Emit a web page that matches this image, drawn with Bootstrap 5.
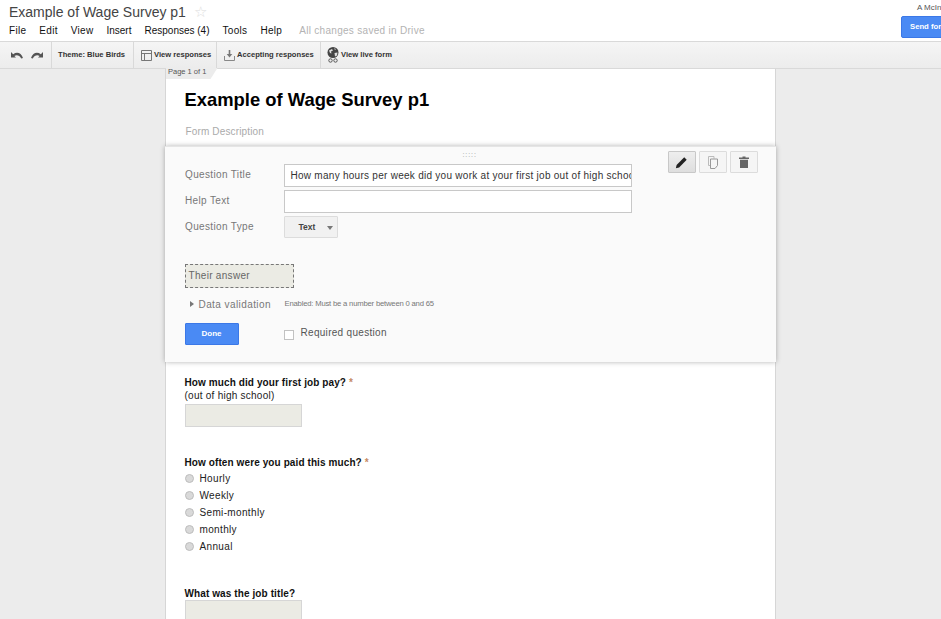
<!DOCTYPE html>
<html lang="en">
<head>
<meta charset="utf-8">
<title>Example of Wage Survey p1</title>
<link href="https://cdn.jsdelivr.net/npm/bootstrap@5.3.0/dist/css/bootstrap.min.css" rel="stylesheet">
<style>
html,body{height:100%;overflow:hidden}
body{font-family:"Liberation Sans",Arial,sans-serif;background:#ececec;color:#000;font-size:11px}
.appframe{height:619px;display:flex;flex-direction:column;overflow:hidden}
.topband{height:41px;background:#fff;flex:none;position:relative;overflow:hidden}
.doc-name{font-size:14px;line-height:20px;color:#444;padding-top:2px;padding-left:9px}
.doc-star{color:#ddd;font-size:15px;margin-left:8px;line-height:20px}
.menu-row{padding-left:9px;gap:13px;font-size:10px;line-height:14px;margin-top:2px;color:#111;letter-spacing:.3px}
.menu-tight{letter-spacing:0}
.saved-note{color:#b3b3b3;margin-left:4px;letter-spacing:.3px}
.acct-name{position:absolute;top:3px;left:917px;font-size:8px;line-height:10px;color:#555;white-space:nowrap}
.send-btn{position:absolute;left:901px;top:16px;width:60px;height:22px;background:#4a8af4;border:1px solid #3b78e7;border-radius:2px;color:#fff;font-weight:700;font-size:7.700px;line-height:20px;padding-left:8px;white-space:nowrap}
.toolstrip{border-top:1px solid #d9d9d9;border-bottom:1px solid #d9d9d9;flex:none;background:linear-gradient(#f5f5f5,#ececec);font-size:7.600px;font-weight:700;color:#333;box-sizing:content-box;height:26px}
.toolcell{height:100%;display:flex;align-items:center;border-right:1px solid #d9d9d9;white-space:nowrap;gap:3px}
.cell-undo{width:52px;padding-left:11px;gap:8px}
.cell-theme{width:82px;padding-left:6px}
.cell-resp{width:83px;padding-left:7px;gap:2px}
.cell-accept{width:104px;padding-left:7px;gap:2px}
.cell-live{border:0;padding-left:6px;gap:2px}
.canvas-row{flex:1 1 auto;display:flex;justify-content:center;min-height:0}
.form-sheet{width:611px;margin-left:-1px;background:#fff;border-left:1px solid #d6d6d6;border-right:1px solid #d6d6d6;position:relative;height:100%}
.page-tab{position:absolute;left:0;top:-1px;width:52px;height:11px;background:#ececec;clip-path:polygon(0 0,100% 0,45px 100%,0 100%);font-size:7.500px;line-height:7px;color:#555;padding-left:2.500px;white-space:nowrap;overflow:hidden}
.form-head{height:77px;padding:20px 0 0 19px}
.form-title{font-size:18.400px;line-height:22px;font-weight:700;margin:0}
.form-desc{font-size:10px;line-height:12px;letter-spacing:.15px;color:#aaa;margin:15px 0 0 1px}
.edit-panel{height:216px;margin:0 -1px;background:#fafafa;box-shadow:0 0 5px rgba(0,0,0,.3);border-top:1px solid #e5e5e5;position:relative;padding:15px 0 0 20px;z-index:1}
.drag-dots{position:absolute;left:298px;top:4px;font-size:7px;line-height:7px;color:#999;letter-spacing:.9px}
.tool-btns{position:absolute;left:503px;top:4px;gap:3px}
.tool-btn{width:28px;height:22px;border:1px solid #dcdcdc;border-radius:1px;background:#f5f5f5;display:flex;align-items:center;justify-content:center}
.tool-btn.is-on{background:linear-gradient(#eee,#dedede);border-color:#c8c8c8}
.field-row{display:flex;align-items:center;height:26px}
.field-lbl{width:99px;flex:none;font-size:10px;letter-spacing:.35px;color:#777;padding-left:.5px;margin-top:-2px}
.text-box{width:348px;height:23px;border:1px solid #c8c8c8;background:#fff;font-size:10px;letter-spacing:.27px;line-height:22px;padding-left:6px;padding-right:5px;color:#333;overflow:hidden;white-space:nowrap}
.type-pick{width:54px;height:22px;border:1px solid #dcdcdc;border-radius:1px;background:#f1f1f1;font-size:8.500px;font-weight:700;color:#444;display:flex;align-items:center;padding-left:14px;position:relative}
.type-pick::after{content:"";position:absolute;left:42px;top:9px;border:3px solid transparent;border-top:4px solid #777;border-bottom:0}
.answer-box{width:109px;height:24px;margin-top:24px;background:#ebebe4;border:1px dashed #777;font-size:10px;letter-spacing:.3px;line-height:22px;padding-left:3px;color:#666}
.valid-row{display:flex;align-items:center;height:14px;margin-top:9px;color:#777}
.valid-name{width:95px;font-size:10px;letter-spacing:.42px;padding-left:5px;display:flex;align-items:center;gap:5px}
.tri-right{width:0;height:0;border:3px solid transparent;border-left:4px solid #777;border-right:0}
.valid-note{font-size:7.700px;color:#777;letter-spacing:-.2px;margin-left:5px}
.done-row{display:flex;align-items:center;margin-top:12px}
.done-btn{width:54px;height:22px;background:#4a8af4;border:1px solid #3b78e7;border-radius:1px;color:#fff;font-weight:700;font-size:8px;text-align:center;line-height:20px}
.req-check{width:10px;height:10px;border:1px solid #c2c2c2;background:#fff;margin-left:45px;margin-top:2px}
.req-text{font-size:10px;letter-spacing:.3px;color:#555;margin-left:7px;margin-top:-3px}
.question-list{padding:14px 0 0 19px}
.q-title{font-size:10px;line-height:13px;font-weight:700;letter-spacing:.1px;color:#111}
.req-mark{color:#c58a63}
.q-help{font-size:10px;line-height:13px;letter-spacing:.25px;color:#222;margin-bottom:2px}
.answer-fill{width:117px;height:23px;background:#ebebe4;border:1px solid #d6d6d6}
.q-second{margin-top:29px;margin-bottom:1px}
.q-third{margin-top:32px}
.opt-row{display:flex;align-items:center;height:17px;font-size:10px;letter-spacing:.35px;color:#222;gap:6px}
.radio-dot{width:9px;height:9px;border-radius:50%;background:#d9d9d9;border:1px solid #bdbdbd;flex:none}
</style>
</head>
<body>
<div class="appframe">
  <div class="topband">
    <div class="doc-name d-flex align-items-center">Example of Wage Survey p1<span class="doc-star">☆</span></div>
    <div class="menu-row d-flex">
      <span>File</span><span>Edit</span><span>View</span><span class="menu-tight">Insert</span><span class="menu-tight">Responses (4)</span><span>Tools</span><span>Help</span>
      <span class="saved-note">All changes saved in Drive</span>
    </div>
    <div class="acct-name">A McIntosh</div>
    <div class="send-btn">Send form</div>
  </div>
  <div class="toolstrip d-flex">
    <div class="toolcell cell-undo">
      <svg width="12" height="7" viewBox="0 0 12 7"><path d="M0 0v5.500h5L3.400 3.900C5.500 2.800 8.500 3 10.200 6.500L12 6C10.300 .8 5.800-.6 2.200 2.300z" fill="#555"/></svg>
      <svg width="12" height="7" viewBox="0 0 12 7"><path d="M12 0v5.500H7l1.600-1.600C6.500 2.800 3.500 3 1.800 6.500L0 6C1.700 .8 6.200-.6 9.800 2.300z" fill="#555"/></svg>
    </div>
    <div class="toolcell cell-theme">Theme: Blue Birds</div>
    <div class="toolcell cell-resp">
      <svg width="11" height="11" viewBox="0 0 11 11"><path d="M.5.500h10v10H.5zM.5 3.500h10M3.500 3.500v7" fill="none" stroke="#777"/></svg>
      View responses</div>
    <div class="toolcell cell-accept">
      <svg width="11" height="11" viewBox="0 0 11 11"><path d="M.5 6v4.500h10V6" fill="none" stroke="#888"/><path d="M4.700 0h1.600v4h2L5.500 7.500 2.700 4h2z" fill="#777"/></svg>
      Accepting responses</div>
    <div class="toolcell cell-live">
      <svg width="12" height="16" viewBox="0 0 12 16"><circle cx="6" cy="5.500" r="5.500" fill="#444"/><path d="M2 3.500l3-1.500 1 1.500-2 1 .5 2-1.500-.5zM7.500 6l3-.5-.5 3-2 1zM7 1.200l2 .8-1 1z" fill="#ddd"/><circle cx="3.500" cy="13.500" r="1.700" fill="none" stroke="#555"/><circle cx="8.500" cy="13.500" r="1.700" fill="none" stroke="#555"/></svg>
      View live form</div>
  </div>
  <div class="canvas-row">
    <div class="form-sheet">
      <div class="page-tab">Page 1 of 1</div>
      <div class="form-head">
        <h1 class="form-title">Example of Wage Survey p1</h1>
        <p class="form-desc">Form Description</p>
      </div>
      <div class="edit-panel">
        <div class="drag-dots">:::::</div>
        <div class="tool-btns d-flex">
          <div class="tool-btn is-on"><svg width="13" height="13" viewBox="0 0 12 12"><path d="M.8 11.200l.7-3L8.500 1.200l2.300 2.300L3.800 10.500z" fill="#222"/></svg></div>
          <div class="tool-btn"><svg width="10" height="13" viewBox="0 0 10 13"><path d="M.5.500h5.500v2M.5.500v9h2" fill="none" stroke="#bbb"/><path d="M2.500 3h7v6.500L7 12.500H2.500z" fill="#f5f5f5" stroke="#999"/></svg></div>
          <div class="tool-btn"><svg width="10" height="12" viewBox="0 0 10 12"><path d="M0 1.500h3.500V.5h3v1H10v1.500H0zM1 3.800h8V12H1z" fill="#666"/></svg></div>
        </div>
        <div class="field-row"><span class="field-lbl">Question Title</span><div class="text-box">How many hours per week did you work at your first job out of high school?</div></div>
        <div class="field-row"><span class="field-lbl">Help Text</span><div class="text-box"></div></div>
        <div class="field-row"><span class="field-lbl">Question Type</span><div class="type-pick">Text</div></div>
        <div class="answer-box">Their answer</div>
        <div class="valid-row"><span class="valid-name"><span class="tri-right"></span>Data validation</span><span class="valid-note">Enabled: Must be a number between 0 and 65</span></div>
        <div class="done-row"><div class="done-btn">Done</div><div class="req-check"></div><div class="req-text">Required question</div></div>
      </div>
      <div class="question-list">
        <div class="q-title">How much did your first job pay? <span class="req-mark">*</span></div>
        <div class="q-help">(out of high school)</div>
        <div class="answer-fill"></div>
        <div class="q-title q-second">How often were you paid this much? <span class="req-mark">*</span></div>
        <div class="opt-row"><span class="radio-dot"></span>Hourly</div>
        <div class="opt-row"><span class="radio-dot"></span>Weekly</div>
        <div class="opt-row"><span class="radio-dot"></span>Semi-monthly</div>
        <div class="opt-row"><span class="radio-dot"></span>monthly</div>
        <div class="opt-row"><span class="radio-dot"></span>Annual</div>
        <div class="q-title q-third">What was the job title?</div>
        <div class="answer-fill"></div>
      </div>
    </div>
  </div>
</div>
<script src="https://cdn.jsdelivr.net/npm/bootstrap@5.3.0/dist/js/bootstrap.bundle.min.js"></script>
</body>
</html>
